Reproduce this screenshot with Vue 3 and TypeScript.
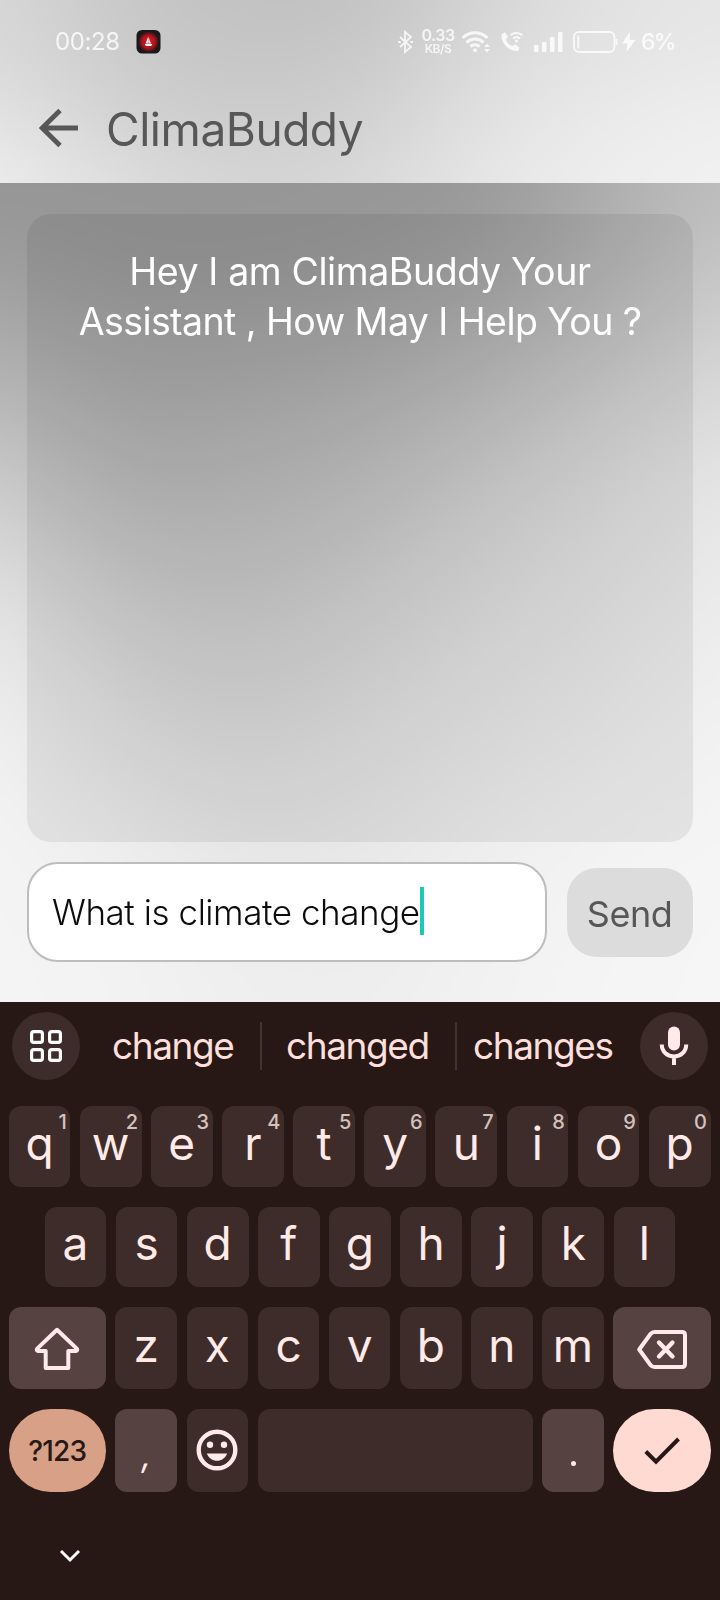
<script setup lang="ts">
import { onMounted, ref } from 'vue'

interface Key {
  label: string
  hint?: string
}

const row1: Key[] = 'qwertyuiop'.split('').map((label, i) => ({ label, hint: String((i + 1) % 10) }))
const row2: Key[] = 'asdfghjkl'.split('').map((label) => ({ label }))
const row3: Key[] = 'zxcvbnm'.split('').map((label) => ({ label }))

// Grey levels of the blurred wallpaper, one row per sample height.
const headerMesh: number[][] = [
  [216, 199, 193, 193, 212, 226, 230],
  [220, 203, 198, 201, 219, 229, 233],
  [229, 210, 204, 208, 226, 235, 239],
  [238, 222, 212, 216, 231, 238, 241],
]
const bodyMesh: number[][] = [
  [149, 150, 150, 150, 151, 172, 190],
  [158, 151, 151, 153, 161, 178, 200],
  [174, 163, 164, 168, 178, 194, 212],
  [192, 174, 177, 182, 195, 211, 224],
  [210, 187, 188, 194, 210, 221, 232],
  [226, 203, 198, 207, 219, 227, 236],
  [236, 216, 209, 217, 226, 232, 240],
  [241, 227, 219, 225, 232, 237, 243],
  [244, 237, 229, 231, 238, 243, 245],
  [244, 242, 236, 235, 241, 244, 246],
  [244, 243, 239, 238, 242, 245, 246],
]

const headerCanvas = ref<HTMLCanvasElement | null>(null)
const bodyCanvas = ref<HTMLCanvasElement | null>(null)

// Cubic B-spline weights keep the gradient free of visible seams.
function weights(t: number): number[] {
  const s = 1 - t
  return [
    (s * s * s) / 6,
    (3 * t * t * t - 6 * t * t + 4) / 6,
    (3 * s * s * s - 6 * s * s + 4) / 6,
    (t * t * t) / 6,
  ]
}

function paint(canvas: HTMLCanvasElement | null, mesh: number[][]): void {
  const ctx = canvas?.getContext('2d')
  if (!canvas || !ctx) return
  const { width, height } = canvas
  const image = ctx.createImageData(width, height)
  const rows = mesh.length - 1
  const cols = mesh[0].length - 1
  const clamp = (n: number, max: number) => Math.max(0, Math.min(n, max))
  for (let y = 0; y < height; y++) {
    const gy = (y / (height - 1)) * rows
    const r = Math.min(Math.floor(gy), rows - 1)
    const wy = weights(gy - r)
    for (let x = 0; x < width; x++) {
      const gx = (x / (width - 1)) * cols
      const c = Math.min(Math.floor(gx), cols - 1)
      const wx = weights(gx - c)
      let v = 0
      for (let j = 0; j < 4; j++) {
        for (let i = 0; i < 4; i++) {
          v += mesh[clamp(r + j - 1, rows)][clamp(c + i - 1, cols)] * wy[j] * wx[i]
        }
      }
      v = Math.round(v)
      image.data.set([v, v, v, 255], (y * width + x) * 4)
    }
  }
  ctx.putImageData(image, 0, 0)
}

onMounted(() => {
  paint(headerCanvas.value, headerMesh)
  paint(bodyCanvas.value, bodyMesh)
})
</script>

<template>
  <div class="phone">
    <header class="top">
      <canvas ref="headerCanvas" class="wallpaper" width="240" height="61"></canvas>
      <div class="status">
        <span class="time">00:28</span>
        <svg class="app-badge" width="25" height="24" viewBox="0 0 25 24">
          <defs>
            <radialGradient id="glow" cx=".5" cy=".5" r=".5">
              <stop offset="0" stop-color="#e01a24" />
              <stop offset=".6" stop-color="#b3141c" />
              <stop offset="1" stop-color="#1d1718" />
            </radialGradient>
          </defs>
          <rect x=".5" y="0" width="24" height="23.5" rx="5.5" fill="#1b181a" />
          <circle cx="12.5" cy="11.8" r="10.5" fill="url(#glow)" />
          <path d="M12.300 6.500v7H9.600zM12.600 7.500l2.400 6H12.600zM8.800 14h7.400l-1 2H9.800z" fill="#fff" />
        </svg>
        <div class="indicators">
          <svg width="16" height="24" viewBox="0 0 16 24" fill="none" stroke="currentColor" stroke-width="1.8">
            <path d="M2 7l11 10-6 5V2l6 5L2 17" />
            <path d="M0 12h2.6M12.4 12H15" />
          </svg>
          <div class="speed"><span>0.33</span><span class="unit">KB/S</span></div>
          <svg class="wifi" width="30" height="24" viewBox="0 0 30 24" fill="none" stroke="currentColor" stroke-width="3">
            <path d="M1.500 8a17.500 17.500 0 0 1 25 0" />
            <path d="M5.500 12.600a12 12 0 0 1 17 0" />
            <path d="M9.500 16.600a6.400 6.400 0 0 1 9 0" />
            <circle cx="14" cy="20.300" r="2" fill="currentColor" stroke="none" />
            <path d="M23 17l3-3.600 3 3.600zM23 19l3 3.600 3-3.600z" fill="currentColor" stroke="none" />
          </svg>
          <svg class="call" width="24" height="22" viewBox="0 0 24 22" fill="none" stroke="currentColor">
            <path d="M1.500 3.500L5 1.200 8 6 5.800 8.400c1.400 3.400 3.600 5.300 6.400 6.600L15 13.300l4.500 3.200-1 3.300C10 21.500.8 13 1.500 3.500z" fill="currentColor" stroke="none" />
            <path d="M10.500 4.300a9 9 0 0 1 12 0M13 7.600a5.500 5.500 0 0 1 7 0" stroke-width="2" />
            <circle cx="16.500" cy="10" r="1.500" fill="currentColor" stroke="none" />
          </svg>
          <svg class="signal" width="30" height="22" viewBox="0 0 30 22" fill="currentColor">
            <rect x="0" y="14" width="4.500" height="7" rx="1" />
            <rect x="8" y="11" width="4.500" height="10" rx="1" />
            <rect x="16" y="6" width="4.500" height="15" rx="1" />
            <rect x="24" y="1" width="4.500" height="20" rx="1" />
          </svg>
          <svg class="battery" width="45" height="22" viewBox="0 0 45 22" fill="none" stroke="currentColor" stroke-width="1.800">
            <rect x="1" y="1" width="40.500" height="20" rx="5" />
            <path d="M43.500 8v6" />
            <path d="M5.300 4.500v13" stroke-width="2" />
          </svg>
          <svg class="bolt" width="14" height="20" viewBox="0 0 14 20" fill="currentColor">
            <path d="M8 0L0 11.500h5.300L4.500 20 13.500 8H7.600z" />
          </svg>
          <span class="percent">6%</span>
        </div>
      </div>
      <div class="title-bar">
        <svg width="42" height="40" viewBox="0 0 42 40" fill="none" stroke="#575757" stroke-width="4.800">
          <path d="M40 20H4M22 2.500L4.200 20 22 37.500" />
        </svg>
        <h1>ClimaBuddy</h1>
      </div>
    </header>

    <main class="chat">
      <canvas ref="bodyCanvas" class="wallpaper" width="240" height="273"></canvas>
      <section class="card">
        <p>Hey I am ClimaBuddy Your</p>
        <p class="second">Assistant , How May I Help You ?</p>
      </section>
      <div class="composer">
        <div class="input"><span>What is climate change</span><i class="caret"></i></div>
        <button class="send">Send</button>
      </div>
    </main>

    <section class="keyboard">
      <div class="suggestions">
        <div class="round">
          <svg width="34" height="34" viewBox="0 0 34 34" fill="none" stroke="#fff" stroke-width="3.200">
            <rect x="2.600" y="2.600" width="10.800" height="10.800" rx="2.200" />
            <rect x="20.600" y="2.600" width="10.800" height="10.800" rx="2.200" />
            <rect x="2.600" y="20.600" width="10.800" height="10.800" rx="2.200" />
            <rect x="20.600" y="20.600" width="10.800" height="10.800" rx="2.200" />
          </svg>
        </div>
        <div class="words">
          <span class="word first">change</span>
          <span class="word middle">changed</span>
          <span class="word last">changes</span>
        </div>
        <div class="round">
          <svg width="30" height="40" viewBox="0 0 30 40" fill="none">
            <rect x="9" y="0.500" width="12" height="24" rx="6" fill="#ffeae8" />
            <path d="M2.800 18.500C2.800 26 8.500 30.500 15 30.500S27.200 26 27.200 18.500M15 30v9" stroke="#ffeae8" stroke-width="4" />
          </svg>
        </div>
      </div>

      <div class="row r1">
        <div v-for="k in row1" :key="k.label" class="key">
          <span class="letter">{{ k.label }}</span>
          <span class="hint">{{ k.hint }}</span>
        </div>
      </div>
      <div class="row r2">
        <div v-for="k in row2" :key="k.label" class="key"><span class="letter">{{ k.label }}</span></div>
      </div>
      <div class="row r3">
        <div class="key wide alt">
          <svg class="shift" width="46" height="44" viewBox="0 0 46 44" fill="none" stroke="#ffeae8" stroke-width="4" stroke-linejoin="round">
            <path d="M23 2.800L3.200 21.600q-1.200 2 1 2.400H11.700V41H34.300V24H41.800q2.200-.4 1-2.400z" />
          </svg>
        </div>
        <div v-for="k in row3" :key="k.label" class="key"><span class="letter">{{ k.label }}</span></div>
        <div class="key wide alt">
          <svg class="backspace" width="52" height="42" viewBox="0 0 52 42" fill="none" stroke="#ffeae8" stroke-width="4" stroke-linejoin="round">
            <path d="M18.500 3H46q3 0 3 3V35q0 3-3 3H18.500q-2.500 0-4-2L3.200 20.500 14.500 5q1.500-2 4-2z" />
            <path d="M23 13.500L36.500 27.500M36.500 13.500L23 27.500" stroke-width="4.400" stroke-linecap="round" />
          </svg>
        </div>
      </div>
      <div class="row r4">
        <div class="key wide symbols">?123</div>
        <div class="key alt"><span class="letter comma">,</span></div>
        <div class="key">
          <svg class="smiley" width="42" height="42" viewBox="0 0 42 42">
            <circle cx="21" cy="21" r="18.300" fill="none" stroke="#ffeae8" stroke-width="4.400" />
            <circle cx="14" cy="15.700" r="3.200" fill="#ffeae8" />
            <circle cx="28" cy="15.700" r="3.200" fill="#ffeae8" />
            <path d="M10.800 24.500H31.200C29.500 29 25.500 31.800 21 31.800S12.500 29 10.800 24.500z" fill="#ffeae8" />
          </svg>
        </div>
        <div class="key space"></div>
        <div class="key alt"><span class="dot"></span></div>
        <div class="key wide enter">
          <svg width="36" height="30" viewBox="0 0 36 30" fill="none" stroke="#271815" stroke-width="4">
            <path d="M1.800 15.500L12 25.600 34.500 3" />
          </svg>
        </div>
      </div>
      <svg class="collapse" width="22" height="14" viewBox="0 0 22 14" fill="none" stroke="#fff" stroke-width="3">
        <path d="M2 2l9 9 9-9" />
      </svg>
    </section>
  </div>
</template>

<style>
body {
  margin: 0;
}
</style>

<style scoped>
.phone {
  width: 720px;
  height: 1600px;
  overflow: hidden;
  display: flex;
  flex-direction: column;
  font-family: Inter, sans-serif;
}

.wallpaper {
  position: absolute;
  inset: 0;
  width: 100%;
  height: 100%;
  z-index: -1;
}

.top {
  position: relative;
  z-index: 0;
  height: 183px;
}

.status {
  display: flex;
  align-items: center;
  height: 83px;
  padding-left: 55px;
  color: rgba(255, 255, 255, 0.8);
}

.time {
  width: 81px;
  font-size: 24px;
  letter-spacing: -0.4px;
}

.indicators {
  display: flex;
  align-items: center;
  margin-left: 237px;
}

.speed {
  display: flex;
  flex-direction: column;
  align-items: center;
  width: 34px;
  margin-left: 7px;
  font-size: 16px;
  line-height: 13px;
  font-weight: 600;
  letter-spacing: -0.5px;
}

.unit {
  font-size: 12px;
  line-height: 13px;
}

.wifi {
  margin-left: 6px;
}

.call {
  margin-left: 9px;
}

.signal {
  margin-left: 10px;
}

.battery {
  margin-left: 9px;
}

.bolt {
  margin-left: 4px;
}

.percent {
  margin-left: 5px;
  font-size: 23px;
  font-weight: 500;
  letter-spacing: -1.8px;
}

.title-bar {
  display: flex;
  align-items: center;
  height: 90px;
  padding-left: 38px;
}

h1 {
  margin: 2px 0 0 26px;
  font-size: 46px;
  font-weight: 400;
  letter-spacing: -0.45px;
  color: #575757;
}

.chat {
  position: relative;
  z-index: 0;
  box-sizing: border-box;
  height: 819px;
  padding: 31px 27px 0;
}

.card {
  box-sizing: border-box;
  height: 628px;
  padding-top: 33px;
  border-radius: 24px;
  background: rgba(0, 0, 0, 0.065);
}

.card p {
  margin: 0;
  font-size: 37.5px;
  line-height: 50px;
  letter-spacing: -0.4px;
  text-align: center;
  white-space: nowrap;
  color: #fff;
}

.card .second {
  letter-spacing: -0.57px;
}

.composer {
  display: flex;
  align-items: center;
  gap: 20px;
  margin-top: 20px;
}

.input {
  box-sizing: border-box;
  display: flex;
  align-items: center;
  width: 520px;
  height: 100px;
  padding-left: 23px;
  border: 2px solid #bdbdbd;
  border-radius: 31px;
  background: #fff;
  color: #0c0c0c;
  font-size: 35px;
  font-weight: 300;
  letter-spacing: -0.44px;
  white-space: nowrap;
}

.caret {
  width: 4px;
  height: 48px;
  margin-top: -2px;
  background: #1cc9b7;
}

.send {
  width: 126px;
  height: 89px;
  padding: 3px 1px 0 0;
  border: 0;
  border-radius: 30px;
  background: #dcdcdc;
  color: #575757;
  font: 400 36px Inter, sans-serif;
  letter-spacing: -0.5px;
}

.keyboard {
  flex: 1;
  background: #271815;
}

.suggestions {
  display: flex;
  align-items: center;
  height: 88px;
  padding: 0 12px;
}

.round {
  display: flex;
  align-items: center;
  justify-content: center;
  width: 68px;
  height: 68px;
  border-radius: 50%;
  background: #3e2c2a;
}

.words {
  display: flex;
  flex: 1;
  align-items: center;
  color: #ffdfdb;
  font-size: 37px;
  letter-spacing: -1.4px;
}

.word {
  box-sizing: border-box;
  height: 48px;
  line-height: 48px;
}

.first {
  width: 180px;
  padding-left: 32px;
}

.middle {
  width: 195px;
  padding-left: 24px;
  border-left: 2px solid #43322f;
}

.last {
  flex: 1;
  padding-left: 16px;
  border-left: 2px solid #43322f;
}

.row {
  display: flex;
  gap: 9.45px;
  padding-left: 8.7px;
}

.r1 {
  height: 81px;
  margin-top: 16px;
}

.r2 {
  height: 80px;
  margin-top: 20px;
  padding-left: 44.6px;
}

.r3 {
  height: 82px;
  margin-top: 20px;
}

.r4 {
  height: 83px;
  margin-top: 20px;
}

.key {
  position: relative;
  flex: none;
  display: flex;
  align-items: center;
  justify-content: center;
  width: 61.7px;
  border-radius: 12px;
  background: #3e2c2a;
  color: #ffeae8;
}

.letter {
  margin-top: -7px;
  font-size: 46px;
  line-height: 1;
}

.r2 .letter {
  margin-top: -9px;
}

.hint {
  position: absolute;
  top: 5px;
  right: 3.5px;
  font-size: 20px;
  line-height: 22px;
  font-weight: 500;
  color: #d4c2bf;
}

.wide {
  width: 97.3px;
}

.alt {
  background: #564240;
}

.symbols {
  border-radius: 42px;
  background: #d8a087;
  color: #271815;
  font-size: 28px;
  font-weight: 500;
  letter-spacing: -0.8px;
}

.r4 .comma {
  margin-top: 8px;
  font-size: 34px;
  font-style: italic;
}

.space {
  width: 275.2px;
}

.dot {
  width: 5px;
  height: 5px;
  margin-top: 26px;
  border-radius: 50%;
  background: #ffeae8;
}

.enter {
  border-radius: 42px;
  background: #ffdad3;
}

.shift {
  margin-top: 1px;
}

.backspace {
  margin: 3px 0 0 1px;
}

.smiley {
  margin: 0 1px 2px 0;
}

.collapse {
  display: block;
  margin: 57px 0 0 59px;
}
</style>
